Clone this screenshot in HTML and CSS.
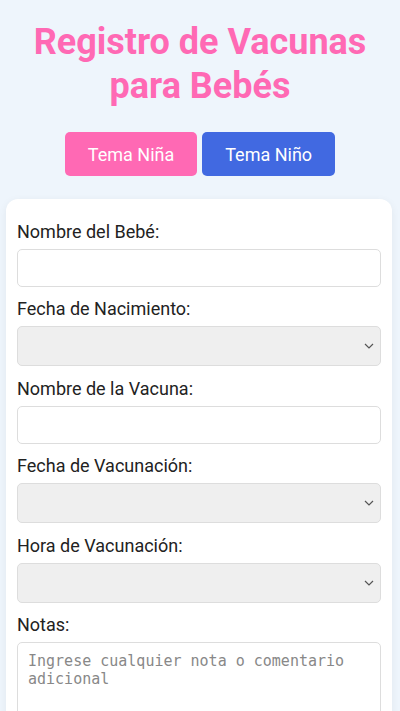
FILE: index.html
```html
<!DOCTYPE html>
<html lang="es">
<head>
  <meta charset="UTF-8">
  <meta name="viewport" content="width=device-width, initial-scale=1">
  <title>Registro de Vacunas para Bebés</title>
  <link rel="stylesheet" href="styles.css">
</head>
<body>

<!-- Encabezado -->
<h1 class="title">Registro de Vacunas para Bebés</h1>

<div class="theme-buttons">
  <button class="btn-theme btn-girl">Tema Niña</button>
  <button class="btn-theme btn-boy">Tema Niño</button>
</div>

<!-- Formulario -->
<div class="card">
  <label for="nombre">Nombre del Bebé:</label>
  <input type="text" id="nombre">

  <label for="nacimiento">Fecha de Nacimiento:</label>
  <select id="nacimiento"></select>

  <label for="vacuna">Nombre de la Vacuna:</label>
  <input type="text" id="vacuna">

  <label for="fechaVacuna">Fecha de Vacunación:</label>
  <select id="fechaVacuna"></select>

  <label for="horaVacuna">Hora de Vacunación:</label>
  <select id="horaVacuna"></select>

  <label for="notas">Notas:</label>
  <textarea id="notas" placeholder="Ingrese cualquier nota o comentario adicional"></textarea>
</div>

</body>
</html>
```

FILE: styles.css
```css
body {
  font-family: Roboto, 'Noto Sans', sans-serif;
  background: #eef5fc;
  margin: 0;
  padding: 0;
}

.title {
  color: #ff69b4;
  font-size: 36px;
  font-weight: 700;
  line-height: 44px;
  text-align: center;
  margin: 20px 20px 0;
}

.theme-buttons {
  display: flex;
  justify-content: center;
  gap: 5px;
  margin: 24px 0 23px;
}

.btn-theme {
  font-family: Roboto, sans-serif;
  font-size: 18px;
  color: white;
  border: none;
  border-radius: 5px;
  height: 44px;
  padding: 0 23px;
  cursor: pointer;
}

.btn-girl {
  background: #ff69b4;
}

.btn-boy {
  background: #4169e1;
}

.card {
  background: white;
  margin: 0 8px 0 6px;
  padding: 22px 11px 20px;
  border-radius: 12px;
  box-shadow: 0 2px 8px rgba(0,0,0,0.06);
}

label {
  display: block;
  font-size: 18px;
  line-height: 21px;
  color: #222;
  margin-bottom: 7px;
}

input, select, textarea {
  display: block;
  width: 100%;
  box-sizing: border-box;
  border: 1px solid #ddd;
  border-radius: 5px;
  margin-bottom: 11.4px;
  font-size: 16px;
}

input {
  height: 38px;
  background: white;
}

select {
  height: 40px;
  background: #efefef;
  appearance: none;
  -webkit-appearance: none;
  background-image: url("data:image/svg+xml,%3Csvg xmlns='http://www.w3.org/2000/svg' width='10' height='6' viewBox='0 0 10 6'%3E%3Cpath d='M1 1l4 4 4-4' fill='none' stroke='%23555' stroke-width='1.2'/%3E%3C/svg%3E");
  background-repeat: no-repeat;
  background-position: right 6px center;
}

textarea {
  height: 100px;
  padding: 9px 10px;
  font-family: 'DejaVu Sans Mono', monospace;
  font-size: 15px;
  line-height: 18px;
  resize: vertical;
}

textarea::placeholder {
  color: #888;
}
```
